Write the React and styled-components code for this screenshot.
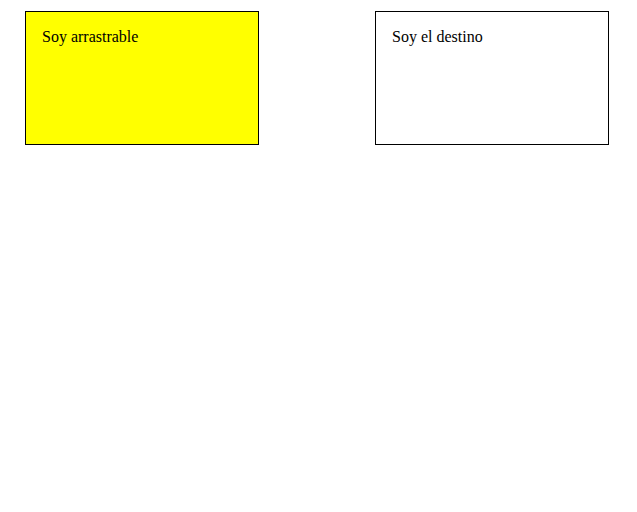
import styled, { createGlobalStyle } from "styled-components";

const GlobalStyle = createGlobalStyle`
  body {
    margin: 0;
    background: #fff;
    font-family: "Liberation Serif", "Times New Roman", serif;
    font-size: 16px;
    color: #000;
  }
`;

const Stage = styled.div`
  display: flex;
  gap: 116px;
  padding: 11px 0 0 25px;
`;

const Box = styled.div`
  box-sizing: border-box;
  width: 234px;
  height: 134px;
  padding: 16px 16px;
  border: 1px solid #000;
  background: ${(p) => (p.$fill ? "#ffff00" : "#fff")};
`;

function App() {
  return (
    <>
      <GlobalStyle />
      <Stage>
        <Box $fill draggable>
          Soy arrastrable
        </Box>
        <Box>Soy el destino</Box>
      </Stage>
    </>
  );
}

export default App;
